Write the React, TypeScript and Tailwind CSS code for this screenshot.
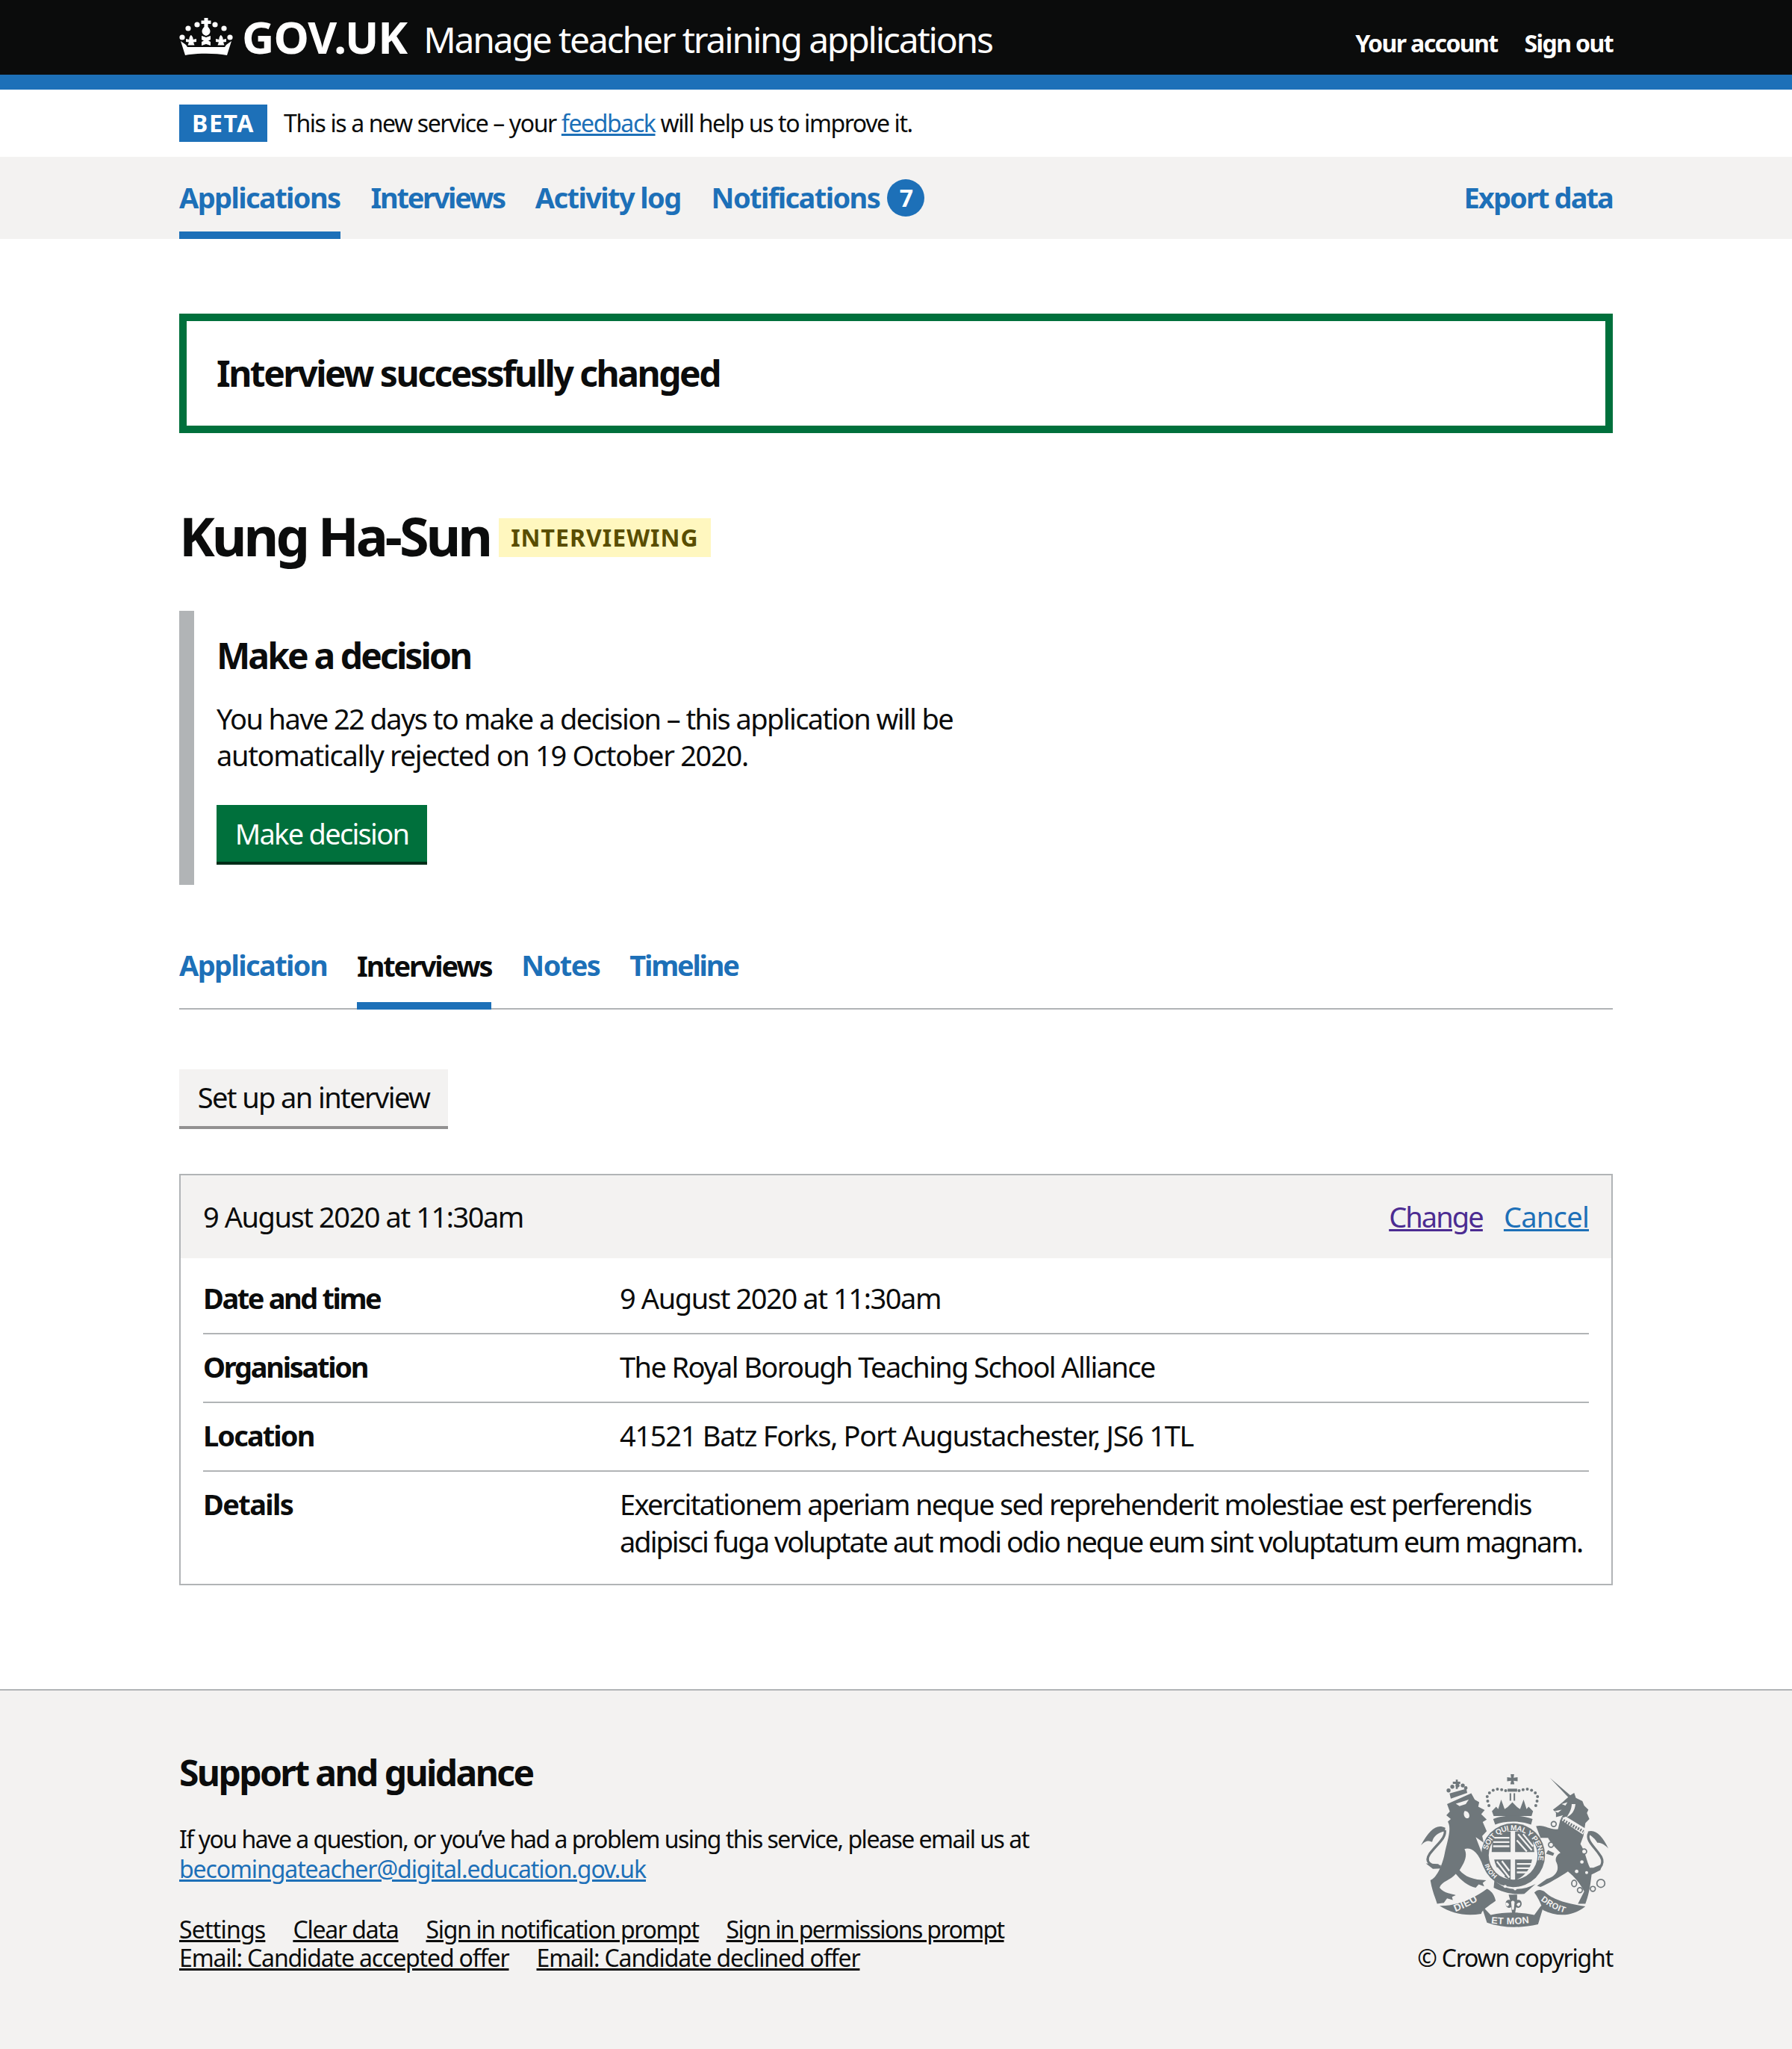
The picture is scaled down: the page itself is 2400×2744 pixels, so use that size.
import React from 'react';

const Crown = () => (
  <svg className="w-[72px] h-[52px] fill-white" viewBox="0 0 72 52" aria-hidden="true">
    <circle cx="4" cy="26" r="3.6" /><circle cx="12" cy="14" r="3.6" /><circle cx="24" cy="9" r="3.6" />
    <circle cx="48" cy="9" r="3.6" /><circle cx="60" cy="14" r="3.6" /><circle cx="68" cy="26" r="3.6" />
    <path d="M33.5 0h5v3.5h4v4.500h-4v4c2 2 3 4 3 6 0 3-2 5-5.500 6-3.500-1-5.500-3-5.500-6 0-2 1-4 3-6v-4h-4V3.500h4z" />
    <path d="M30 24l6 2 6-2v5l-3 1.500 3 1.500v5l-6-2-6 2v-5l3-1.500-3-1.500z" />
    <path d="M16 23c2 2 3 4 2.500 6l4.500-1v4l-4 .5 1.500 4h-9l1.500-4-4-.5v-4l4.500 1c-.5-2 .5-4 2-6z" />
    <path d="M56 23c2 2 3 4 2.500 6l4.500-1v4l-4 .5 1.500 4h-9l1.500-4-4-.5v-4l4.500 1c-.5-2 .5-4 2-6z" />
    <path d="M2 31l7 5 2 3h50l2-3 7-5-6 19c-16-3-40-3-56 0z" />
  </svg>
);

const Crest = ({ className }: { className: string }) => (
  <svg className={`fill-[#6f777b] ${className}`} viewBox="130 120 752 620" aria-hidden="true">
    {/* lion */}
    <path d="M235 240 L332 196 L346 222 L364 232 L360 250 L386 264 L372 280 L394 302 L378 312 L394 348 L376 368 L382 395 L350 372 L372 430 L398 482 L380 490 C360 430 330 412 305 420 C320 450 300 480 285 505 C305 530 340 545 392 545 L378 556 L384 570 L362 562 L350 575 C320 570 290 545 270 520 C250 545 212 550 205 575 C225 600 255 598 270 605 L255 612 L258 625 L235 618 L222 636 L195 640 C190 620 175 590 168 545 C190 540 215 490 225 440 C235 390 255 340 238 310 L250 300 L232 285 L246 270 Z" />
    <path d="M270 238 L322 222 L310 240 L285 248 Z" fill="#f3f2f1" />
    <path d="M305 268 C325 265 330 295 318 297 C305 298 298 280 305 268 Z" fill="#f3f2f1" />
    <path d="M210 490 C165 490 145 470 165 440 C195 400 232 375 226 345" fill="none" stroke="#6f777b" strokeWidth="10" />
    <path d="M228 335 C190 318 165 345 130 405 C150 385 160 385 175 392 C180 370 195 355 226 348 Z" />
    <path d="M200 480 L150 478 L178 500 L212 498 Z" />
    {/* lion crown */}
    <path d="M245 197 L312 178 L316 195 L250 218 Z" />
    <circle cx="241" cy="185" r="8" /><circle cx="256" cy="170" r="8" /><circle cx="277" cy="165" r="8" /><circle cx="298" cy="165" r="8" /><circle cx="310" cy="175" r="7" />
    <path d="M258 150h12v-8h8v8h10v9h-10v20h-8v-20h-12z" />
    {/* big crown */}
    <path d="M490 120h14l-2 14 16-2v16l-16-2 3 14h-16l3-14-16 2v-16l16 2z" />
    <path d="M478 178h38v12h-38z" /><path d="M486 196h6v30h-6zM502 196h6v30h-6z" />
    <g>
      <circle cx="398" cy="228" r="6" /><circle cx="396" cy="210" r="6" /><circle cx="405" cy="195" r="6" /><circle cx="420" cy="184" r="6" /><circle cx="437" cy="180" r="6" /><circle cx="454" cy="182" r="6" /><circle cx="470" cy="186" r="6" />
      <circle cx="524" cy="186" r="6" /><circle cx="540" cy="182" r="6" /><circle cx="557" cy="180" r="6" /><circle cx="574" cy="184" r="6" /><circle cx="589" cy="195" r="6" /><circle cx="598" cy="210" r="6" /><circle cx="596" cy="228" r="6" /><circle cx="403" cy="246" r="6" /><circle cx="591" cy="246" r="6" />
    </g>
    <path d="M415 268 L432 250 L440 260 L452 222 L466 260 L478 252 L497 232 L516 252 L528 260 L542 222 L554 260 L562 250 L580 268 L574 288 L422 288 Z" />
    <path d="M420 300 C460 282 535 282 578 300 L572 322 C530 306 465 306 428 322 Z" />
    {/* unicorn */}
    <path d="M648 135 L738 212 L730 222 Z" />
    <path d="M728 205 L745 195 L752 215 L778 228 L785 246 L802 262 L796 276 L806 300 L790 316 L782 368 L770 400 C790 430 795 470 808 495 L822 495 L858 480 L850 505 L815 522 C810 560 808 590 790 640 L760 640 L785 590 C770 560 745 530 720 510 C690 530 640 560 610 572 L596 568 L635 540 C670 530 690 505 672 470 C668 455 678 440 690 435 C670 415 650 395 640 375 L610 375 L592 328 C625 320 650 345 680 340 L690 300 L700 285 L672 292 L672 275 L660 262 C690 240 710 222 728 205 Z" />
    <path d="M750 240 C748 265 735 285 715 292 C730 270 735 255 735 240 Z" fill="#f3f2f1" />
    <path d="M695 240 L718 232 L710 246 Z" fill="#f3f2f1" />
    <path d="M665 268 L695 262 L680 274 Z" fill="#f3f2f1" />
    <path d="M686 300 L780 362 L790 338 L712 290 Z" fill="#f3f2f1" />
    <path d="M692 300 L782 350" fill="none" stroke="#6f777b" strokeWidth="12" strokeDasharray="6 5" />
    <circle cx="663" cy="320" r="10" fill="#f3f2f1" stroke="#6f777b" strokeWidth="5" />
    <circle cx="652" cy="403" r="10" fill="#f3f2f1" stroke="#6f777b" strokeWidth="5" />
    <path d="M640 425 l25 12 -5 10 -28 -8z" />
    <circle cx="785" cy="430" r="10" fill="#f3f2f1" stroke="#6f777b" strokeWidth="5" />
    <circle cx="776" cy="472" r="7" fill="#f3f2f1" /><circle cx="755" cy="510" r="7" fill="#f3f2f1" /><circle cx="795" cy="515" r="6" fill="#f3f2f1" />
    <ellipse cx="745" cy="558" rx="10" ry="13" fill="#f3f2f1" stroke="#6f777b" strokeWidth="5" />
    <circle cx="768" cy="585" r="10" fill="#f3f2f1" stroke="#6f777b" strokeWidth="5" />
    <circle cx="820" cy="580" r="10" fill="#f3f2f1" stroke="#6f777b" strokeWidth="5" />
    <circle cx="852" cy="558" r="16" fill="#f3f2f1" stroke="#6f777b" strokeWidth="5" />
    <path d="M805 520 C860 500 870 470 845 440 C825 410 790 385 805 355" fill="none" stroke="#6f777b" strokeWidth="10" />
    <path d="M800 350 C830 338 860 370 882 418 C865 400 850 395 838 395 C830 380 815 368 804 362 Z" />
    {/* shield and garter */}
    <circle cx="500" cy="445" r="128" />
    <circle cx="500" cy="445" r="98" fill="#f3f2f1" />
    <path d="M418 368 C450 352 470 350 490 350 V432 H414 Z M508 350 C535 350 560 355 578 370 L585 432 H508 Z M424 462 H490 V545 C455 530 432 500 424 462 Z M508 462 H576 C570 500 545 532 508 545 Z" />
    <path d="M425 375h60M420 392h65M420 409h65M520 360l55 65M540 360l40 50M515 385l40 45M435 470l50 65M455 468l30 40M435 495l30 35M515 480h60M515 497h55M515 514h45" stroke="#f3f2f1" strokeWidth="7" fill="none" />
    <defs>
      <path id="garter-top" d="M398 425 A103 103 0 1 1 570 522" />
      <path id="garter-bottom" d="M437 527 A103 103 0 0 1 398 452" />
      <path id="band-left" d="M268 672 C310 655 345 640 380 610" />
      <path id="band-mid" d="M412 718 C465 724 535 724 585 712" />
      <path id="band-right" d="M610 625 C640 650 680 672 730 682" />
    </defs>
    <text fill="#f3f2f1" fontFamily="'Liberation Sans', sans-serif" fontWeight="700" fontSize="30"><textPath href="#garter-top">SOIT QUI MAL Y PENSE</textPath></text>
    <text fill="#f3f2f1" fontFamily="'Liberation Sans', sans-serif" fontWeight="700" fontSize="26"><textPath href="#garter-bottom">HONI</textPath></text>
    <path d="M425 545 C470 590 535 590 590 560 L545 600 C495 605 450 590 422 575 Z" />
    <circle cx="468" cy="570" r="6" fill="#f3f2f1" /><circle cx="508" cy="580" r="6" fill="#f3f2f1" />
    {/* rose and banner */}
    <path d="M482 603h34v22c8-4 20 2 18 18-2 14-16 16-22 10l-4 24h-12l-4-24c-6 6-20 4-22-10-2-16 10-22 18-18z" />
    <path d="M492 632c4-6 10-6 14 0l-3 32h-8zM470 636c6-3 12 0 14 8l-6 6c-6 0-10-6-8-14zM528 636c-6-3-12 0-14 8l6 6c6 0 10-6 8-14z" fill="#f3f2f1" />
    <path d="M205 648 C270 650 340 620 395 580 C415 590 425 605 430 628 C400 650 375 665 372 680 C310 690 255 680 205 648 Z" />
    <path d="M410 685 C470 672 530 672 585 685 L610 650 L625 640 L600 722 C530 738 460 738 395 715 L372 645 Z" />
    <path d="M585 595 C600 578 615 585 625 590 C660 625 720 640 790 650 C740 690 680 695 620 665 C612 640 600 615 585 595 Z" />
    <text fill="#f3f2f1" fontFamily="'Liberation Sans', sans-serif" fontWeight="700" fontSize="40"><textPath href="#band-left" letterSpacing="2">DIEU</textPath></text>
    <text fill="#f3f2f1" fontFamily="'Liberation Sans', sans-serif" fontWeight="700" fontSize="38"><textPath href="#band-mid" letterSpacing="1">ET MON</textPath></text>
    <text fill="#f3f2f1" fontFamily="'Liberation Sans', sans-serif" fontWeight="700" fontSize="34"><textPath href="#band-right" letterSpacing="1">DROIT</textPath></text>
  </svg>
);

const rows = [
  { label: 'Date and time', labelClass: 'tracking-[-2.4px]', value: [['9 August 2020 at 11:30am', 'tracking-[-1.4px]']] },
  { label: 'Organisation', labelClass: 'tracking-[-2.3px]', value: [['The Royal Borough Teaching School Alliance', 'tracking-[-1.6px]']] },
  { label: 'Location', labelClass: 'tracking-[-1.9px]', value: [['41521 Batz Forks, Port Augustachester, JS6 1TL', 'tracking-[-1.3px]']] },
  {
    label: 'Details',
    labelClass: 'tracking-[-1.6px]',
    value: [
      ['Exercitationem aperiam neque sed reprehenderit molestiae est perferendis', 'tracking-[-1.7px]'],
      ['adipisci fuga voluptate aut modi odio neque eum sint voluptatum eum magnam.', 'tracking-[-2px]'],
    ],
  },
];

const footerLinks = [
  [
    ['Settings', 'tracking-[-0.8px]'],
    ['Clear data', 'tracking-[-1.2px]'],
    ['Sign in notification prompt', 'tracking-[-1.35px]'],
    ['Sign in permissions prompt', 'tracking-[-1.6px]'],
  ],
  [
    ['Email: Candidate accepted offer', 'tracking-[-1.15px]'],
    ['Email: Candidate declined offer', 'tracking-[-1.15px]'],
  ],
];

export default function App() {
  return (
    <div className="min-h-[2744px] flex flex-col bg-white text-[#0b0c0c] text-[38px] leading-[50px] font-['Noto_Sans',sans-serif] tracking-[-1.7px]">
      {/* Header */}
      <header className="bg-[#0b0c0c] h-[100px] px-[240px] flex items-center justify-between text-white">
        <div className="flex items-center">
          <Crown />
          <span className="ml-[12px] mb-[3px] text-[60px] font-bold tracking-[-1px]">GOV.UK</span>
          <span className="ml-[22px] mt-[5px] text-[48px] tracking-[-2.2px]">Manage teacher training applications</span>
        </div>
        <div className="flex gap-[36px] mt-[16px] text-[32px] font-bold tracking-[-1.6px]">
          <span>Your account</span>
          <span>Sign out</span>
        </div>
      </header>
      <div className="bg-[#1d70b8] h-[20px]" />

      {/* Beta */}
      <div className="h-[90px] px-[240px] flex items-center text-[32px] tracking-[-1.4px]">
        <strong className="bg-[#1d70b8] text-white w-[118px] h-[50px] flex items-center justify-center tracking-[1.6px]">BETA</strong>
        <p className="ml-[22px]">
          This is a new service – your <a className="text-[#1d70b8] underline">feedback</a> will help us to improve it.
        </p>
      </div>

      {/* Primary nav */}
      <nav className="bg-[#f3f2f1] h-[110px] px-[240px] flex justify-between font-bold text-[#1d70b8] tracking-[-1.6px]">
        <div className="flex gap-[41px]">
          <a className="border-b-[10px] border-[#1d70b8] flex items-center pt-[8px]">Applications</a>
          <a className="flex items-center pb-[2px] tracking-[-2.3px]">Interviews</a>
          <a className="flex items-center pb-[2px]">Activity log</a>
          <a className="flex items-center">
            <span className="mb-[2px]">Notifications</span>
            <span className="ml-[10px] w-[50px] h-[50px] rounded-full bg-[#1d70b8] text-white flex items-center justify-center text-[32px]">7</span>
          </a>
        </div>
        <a className="flex items-center pb-[2px] tracking-[-1.9px]">Export data</a>
      </nav>

      <main className="px-[240px] pt-[100px] pb-[139px]">
        {/* Success banner */}
        <div className="border-[10px] border-[#00703c] h-[160px] pl-[40px] flex items-center text-[48px] font-bold tracking-[-2.5px]">
          Interview successfully changed
        </div>

        {/* Title */}
        <div className="mt-[100px] flex items-center h-[80px]">
          <h1 className="mb-[6px] text-[72px] font-bold tracking-[-4px]">Kung Ha-Sun</h1>
          <strong className="ml-[12px] h-[52px] px-[16px] bg-[#fff7bf] text-[#594d00] text-[32px] tracking-[1px] flex items-center">INTERVIEWING</strong>
        </div>

        {/* Decision */}
        <section className="mt-[58px] border-l-[20px] border-[#b1b4b6] h-[367px] pl-[30px] pt-[30px]">
          <h2 className="text-[48px] leading-[60px] font-bold tracking-[-2.9px]">Make a decision</h2>
          <p className="mt-[30px] leading-[49px]">
            <span className="tracking-[-1.6px]">You have 22 days to make a decision – this application will be</span>
            <br />
            <span className="tracking-[-1.3px]">automatically rejected on 19 October 2020.</span>
          </p>
          <button className="mt-[42px] block h-[80px] w-[282px] bg-[#00703c] border-b-[4px] border-[#002d18] text-white">Make decision</button>
        </section>

        {/* Tabs */}
        <div className="mt-[75px] flex gap-[40px] h-[92px] border-b-2 border-[#b1b4b6] font-bold text-[#1d70b8] tracking-[-1.6px]">
          <a className="flex items-center pb-[26px]">Application</a>
          <a className="flex items-center pb-[16px] border-b-[10px] border-[#1d70b8] text-[#0b0c0c] h-[92px] tracking-[-2.2px]">Interviews</a>
          <a className="flex items-center pb-[26px]">Notes</a>
          <a className="flex items-center pb-[26px] tracking-[-2.2px]">Timeline</a>
        </div>

        <button className="mt-[80px] block h-[80px] w-[360px] pb-[2px] bg-[#f3f2f1] border-b-[4px] border-[#929191] tracking-[-1.6px]">Set up an interview</button>

        {/* Interview card */}
        <div className="mt-[60px] border-2 border-[#b1b4b6]">
          <div className="h-[111px] pb-[2px] bg-[#f3f2f1] px-[30px] flex items-center justify-between">
            <span className="tracking-[-1.45px]">9 August 2020 at 11:30am</span>
            <div className="flex gap-[28px]">
              <a className="text-[#4c2c92] underline tracking-[-1.9px]">Change</a>
              <a className="text-[#1d70b8] underline tracking-[-0.7px]">Cancel</a>
            </div>
          </div>
          <dl className="px-[30px] pt-[10px] pb-[10px]">
            {rows.map((row, i) => (
              <div key={row.label} className={`flex pt-[18px] pb-[22px] ${i < rows.length - 1 ? 'border-b-2 border-[#b1b4b6]' : ''}`}>
                <dt className={`w-[558px] shrink-0 font-bold ${row.labelClass}`}>{row.label}</dt>
                <dd className="whitespace-nowrap">
                  {row.value.map(([line, tracking]) => (
                    <div key={line} className={tracking}>{line}</div>
                  ))}
                </dd>
              </div>
            ))}
          </dl>
        </div>
      </main>

      {/* Footer */}
      <footer className="flex-1 bg-[#f3f2f1] border-t-2 border-[#b1b4b6] px-[240px] flex justify-between text-[32px] leading-[40px] tracking-[-1.2px]">
        <div className="pt-[80px]">
          <h2 className="text-[48px] leading-[60px] font-bold tracking-[-2.6px]">Support and guidance</h2>
          <p className="mt-[39px] tracking-[-1.5px]">If you have a question, or you’ve had a problem using this service, please email us at</p>
          <a className="text-[#1d70b8] underline tracking-[-1.1px]">becomingateacher@digital.education.gov.uk</a>
          <div className="mt-[42px]">
            {footerLinks.map((line) => (
              <div key={line[0][0]} className="flex gap-[37px] leading-[38px]">
                {line.map(([link, tracking]) => (
                  <a key={link} className={`underline ${tracking}`}>{link}</a>
                ))}
              </div>
            ))}
          </div>
        </div>
        <div className="pt-[112px] flex flex-col items-end">
          <Crest className="w-[251px] h-[207px] mr-[6px]" />
          <span className="mt-[19px]">© Crown copyright</span>
        </div>
      </footer>
    </div>
  );
}
